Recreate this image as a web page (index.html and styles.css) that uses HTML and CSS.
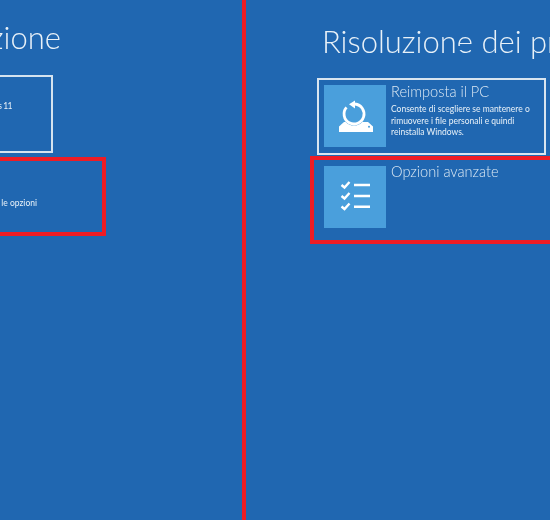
FILE: index.html
```html
<!DOCTYPE html>
<html lang="it">
<head>
<meta charset="utf-8">
<title>Risoluzione dei problemi</title>
<link rel="stylesheet" href="styles.css">
</head>
<body>
<main class="screens">
  <section class="panel panel-left">
    <h1 class="title title-left">Risoluzione</h1>
    <div class="left-card left-card-white"><span class="left-text">Windows 11</span></div>
    <div class="left-card left-card-red"><span class="left-text">Modifica le opzioni</span></div>
  </section>
  <div class="divider"></div>
  <section class="panel panel-right">
    <h1 class="title title-right">Risoluzion<span class="glitch">e</span> dei problemi</h1>
    <div class="card card-white">
      <div class="tile">
        <svg width="62" height="62" viewBox="0 0 62 62" aria-hidden="true">
          <path d="M15 47V41.500L20 37H44L49 41.500V47Z" fill="#fff"/>
          <circle cx="45" cy="41.700" r="1" fill="#4a9fdc"/>
          <circle cx="30" cy="29" r="11.500" fill="#4a9fdc"/>
          <path d="M31 19A10 10 0 1 1 22.500 22.400" fill="none" stroke="#fff" stroke-width="2.800"/>
          <path d="M25 19.300 31 15.500V23.500Z" fill="#fff"/>
        </svg>
      </div>
      <div class="card-body">
        <h2 class="card-title">Reimposta il PC</h2>
        <p class="card-desc">Consente di scegliere se mantenere o rimuovere i file personali e quindi reinstalla Windows.</p>
      </div>
    </div>
    <div class="card card-red">
      <div class="tile">
        <svg width="62" height="62" viewBox="0 0 62 62" aria-hidden="true">
          <g fill="none" stroke="#fff" stroke-width="2.400">
            <path d="M17.500 19 20.500 21.500 25.500 16"/>
            <path d="M17.500 30 20.500 32.500 25.500 27"/>
            <path d="M17.500 40.500 20.500 43 25.500 37.500"/>
            <path d="M30 19H46M30 30H46M30 40.700H46"/>
          </g>
        </svg>
      </div>
      <div class="card-body card-body-tight">
        <h2 class="card-title">Opzioni avanzate</h2>
      </div>
    </div>
  </section>
</main>
</body>
</html>
```
FILE: styles.css
```css
* { box-sizing: border-box; }
html, body { margin: 0; height: 100%; overflow: hidden; }
body { background: #2067b1; color: #e8f1f8; font-family: Lato, "Open Sans", "Liberation Sans", sans-serif; }
.screens { display: flex; width: 550px; height: 520px; }
.panel { overflow: hidden; flex: none; height: 520px; }
.panel-left { width: 242px; }
.divider { width: 4px; flex: none; background: #ee1c25; }
.panel-right { width: 304px; }
.title { margin: 0; font-weight: 300; font-size: 31px; line-height: 40px; white-space: nowrap; filter: blur(0.35px); }
.title-left { width: 61px; margin-top: 17px; direction: rtl; }
.title-right { margin: 21px 0 0 76px; }
.glitch { position: relative; }
.glitch::after { content: ""; position: absolute; left: 0; right: 0; top: 24px; height: 4px; background: #2067b1; }
.left-card { margin-left: -200px; text-align: right; }
.left-card-white { width: 253px; height: 78px; margin-top: 18px; border: 2px solid #d5e3ef; padding: 24px 39px 0 0; letter-spacing: -0.500px; }
.left-card-red { width: 306px; height: 79px; margin-top: 4px; border: 4px solid #ee1c25; padding: 37px 65px 0 0; }
.left-text { font-size: 8.500px; line-height: 10px; display: block; white-space: nowrap; filter: blur(0.3px); }
.card { display: flex; }
.card-white { width: 229px; height: 77px; margin: 17px 0 0 71px; border: 2px solid #d8e5f0; padding: 5px; gap: 5px; }
.card-red { width: 300px; height: 88px; margin: 1px 0 0 64px; border: 4px solid #ee1c25; padding: 5px 0 0 10px; gap: 5px; }
.card-red .tile { margin-top: 1px; }
.tile { width: 62px; height: 62px; flex: none; background: #4a9fdc; }
.tile svg { display: block; filter: blur(0.3px); }
.card-body { margin-top: -2px; min-width: 0; }
.card-body-tight { margin-top: -2px; }
.card-title { margin: 0; font-weight: 300; font-size: 14.600px; line-height: 17px; white-space: nowrap; filter: blur(0.25px); color: #dce9f4; }
.card-desc { margin: 4px 0 0; font-size: 8.500px; line-height: 11.500px; width: 148px; filter: blur(0.25px); }
```
